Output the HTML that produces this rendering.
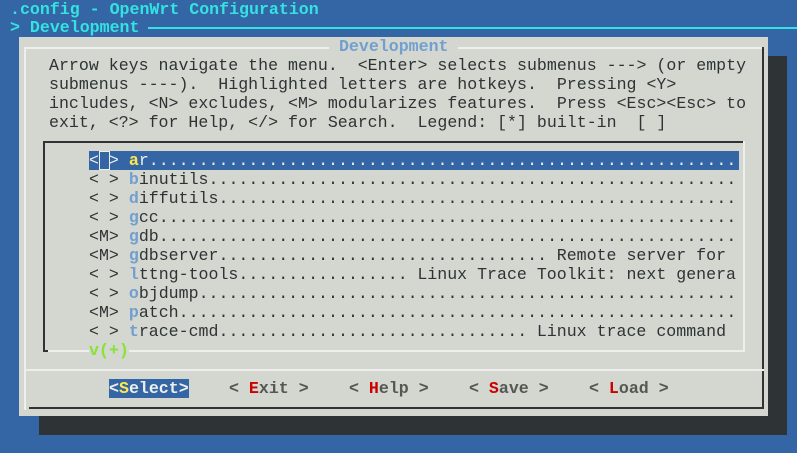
<!DOCTYPE html>
<html><head><meta charset="utf-8"><style>
*{margin:0;padding:0;box-sizing:border-box}
body{width:797px;height:453px;background:#3465a4;overflow:hidden;position:relative;font-family:"Liberation Mono","Cousine","Courier New","Nimbus Mono PS",Courier,monospace;font-size:16.6px;line-height:19px;white-space:pre}
.a{position:absolute}
.r{position:absolute;height:19px;font-family:"Liberation Mono","Cousine","Courier New",Courier,monospace}
.cy{color:#34e2e2}
.dk{color:#2e3436}
.hb{color:#729fcf;font-weight:bold}
.b{font-weight:bold}
.line{display:flex;width:647px;overflow:hidden;color:#2e3436}
.dots{flex:1;overflow:hidden}
</style></head><body>
<div class="a" style="left:768px;top:56px;width:19px;height:379px;background:#2e3436"></div>
<div class="a" style="left:39px;top:416px;width:748px;height:19px;background:#2e3436"></div>
<div class="r cy b" style="left:10px;top:0">.config - OpenWrt Configuration</div>
<div class="r cy b" style="left:10px;top:18px">&gt; Development</div>
<div class="a" style="left:148px;top:27px;width:649px;height:2px;background:#34e2e2"></div>
<div class="a" style="left:19px;top:37px;width:749px;height:379px;background:#d3d7cf"></div>
<div class="a" style="left:24px;top:47px;width:740px;height:2px;background:#eeeeec"></div>
<div class="a" style="left:24px;top:47px;width:2px;height:363px;background:#eeeeec"></div>
<div class="a" style="left:762px;top:47px;width:2px;height:362px;background:#2e3436"></div>
<div class="a" style="left:29px;top:407px;width:735px;height:2px;background:#2e3436"></div>
<div class="a" style="left:24px;top:369px;width:740px;height:2px;background:#eeeeec"></div>
<div class="r hb" style="left:329px;top:37px;background:#d3d7cf"> Development </div>
<div class="r dk" style="left:49px;top:56px">Arrow keys navigate the menu.  &lt;Enter&gt; selects submenus ---&gt; (or empty</div>
<div class="r dk" style="left:49px;top:75px">submenus ----).  Highlighted letters are hotkeys.  Pressing &lt;Y&gt;</div>
<div class="r dk" style="left:49px;top:94px">includes, &lt;N&gt; excludes, &lt;M&gt; modularizes features.  Press &lt;Esc&gt;&lt;Esc&gt; to</div>
<div class="r dk" style="left:49px;top:113px">exit, &lt;?&gt; for Help, &lt;/&gt; for Search.  Legend: [*] built-in  [ ]</div>
<div class="a" style="left:43px;top:141px;width:702px;height:2px;background:#2e3436"></div>
<div class="a" style="left:43px;top:141px;width:2px;height:211px;background:#2e3436"></div>
<div class="a" style="left:43px;top:350px;width:5px;height:2px;background:#2e3436"></div>
<div class="a" style="left:48px;top:350px;width:697px;height:2px;background:#eeeeec"></div>
<div class="a" style="left:743px;top:141px;width:2px;height:211px;background:#eeeeec"></div>
<div class="a" style="left:89px;top:151px;width:650px;height:19px;background:#3465a4"></div>
<div class="a" style="left:99px;top:151px;width:11px;height:19px;border:1px solid #eeeeec"></div>
<div class="r line" style="left:89px;top:151px;color:#eeeeec">&lt; &gt; <span style="color:#fce94f;font-weight:bold">a</span><span>r</span><span class="dots">........................................................................</span></div>
<div class="r line" style="left:89px;top:170px">&lt; &gt; <span class="hb">b</span><span>inutils</span><span class="dots">........................................................................</span></div>
<div class="r line" style="left:89px;top:189px">&lt; &gt; <span class="hb">d</span><span>iffutils</span><span class="dots">........................................................................</span></div>
<div class="r line" style="left:89px;top:208px">&lt; &gt; <span class="hb">g</span><span>cc</span><span class="dots">........................................................................</span></div>
<div class="r line" style="left:89px;top:227px">&lt;M&gt; <span class="hb">g</span><span>db</span><span class="dots">........................................................................</span></div>
<div class="r line" style="left:89px;top:246px">&lt;M&gt; <span class="hb">g</span><span>dbserver</span><span class="dots">........................................................................</span><span> Remote server for </span></div>
<div class="r line" style="left:89px;top:265px">&lt; &gt; <span class="hb">l</span><span>ttng-tools</span><span class="dots">........................................................................</span><span> Linux Trace Toolkit: next genera</span></div>
<div class="r line" style="left:89px;top:284px">&lt; &gt; <span class="hb">o</span><span>bjdump</span><span class="dots">........................................................................</span></div>
<div class="r line" style="left:89px;top:303px">&lt;M&gt; <span class="hb">p</span><span>atch</span><span class="dots">........................................................................</span></div>
<div class="r line" style="left:89px;top:322px">&lt; &gt; <span class="hb">t</span><span>race-cmd</span><span class="dots">........................................................................</span><span> Linux trace command </span></div>
<div class="r b" style="left:89px;top:341px;color:#8ae234;background:#d3d7cf">v(+)</div>
<div class="r b" style="left:109px;top:379px;background:#3465a4;color:#eeeeec">&lt;<span style="color:#fce94f">S</span>elect&gt;</div>
<div class="r b" style="left:229px;top:379px;color:#555753">&lt; <span style="color:#cc0000">E</span>xit &gt;</div>
<div class="r b" style="left:349px;top:379px;color:#555753">&lt; <span style="color:#cc0000">H</span>elp &gt;</div>
<div class="r b" style="left:469px;top:379px;color:#555753">&lt; <span style="color:#cc0000">S</span>ave &gt;</div>
<div class="r b" style="left:589px;top:379px;color:#555753">&lt; <span style="color:#cc0000">L</span>oad &gt;</div>
</body></html>
